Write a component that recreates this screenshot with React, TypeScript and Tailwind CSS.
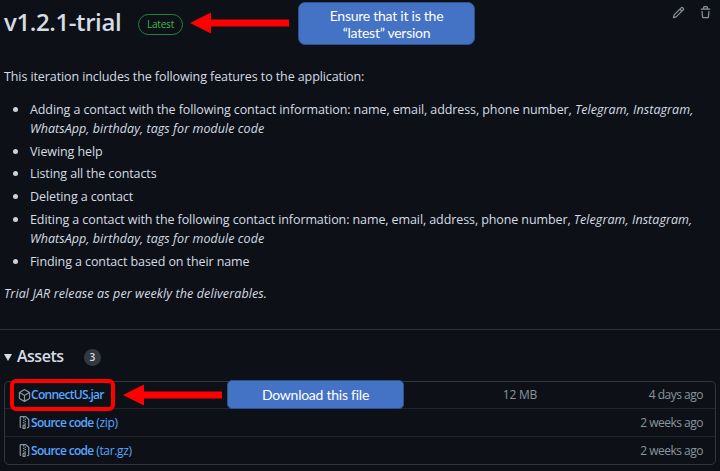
import type { ReactNode } from "react";

const PENCIL =
  "M11.013 1.427a1.75 1.75 0 012.474 0l1.086 1.086a1.75 1.75 0 010 2.474l-8.61 8.61c-.21.21-.47.364-.756.445l-3.251.93a.75.75 0 01-.927-.928l.929-3.25a1.75 1.75 0 01.445-.758l8.61-8.61zm1.414 1.06a.25.25 0 00-.354 0L10.811 3.75l1.439 1.44 1.263-1.263a.25.25 0 000-.354l-1.086-1.086zM11.189 6.25L9.75 4.81l-6.286 6.287a.25.25 0 00-.064.108l-.558 1.953 1.953-.558a.249.249 0 00.108-.064l6.286-6.286z";
const TRASH =
  "M6.5 1.75a.25.25 0 01.25-.25h2.5a.25.25 0 01.25.25V3h-3V1.75zm4.5 0V3h2.25a.75.75 0 010 1.5H2.75a.75.75 0 010-1.5H5V1.75C5 .784 5.784 0 6.75 0h2.5C10.216 0 11 .784 11 1.75zM4.496 6.675a.75.75 0 10-1.492.15l.66 6.6A1.75 1.75 0 005.405 15h5.19c.9 0 1.652-.681 1.741-1.576l.66-6.6a.75.75 0 00-1.492-.149l-.66 6.6a.25.25 0 01-.249.225h-5.19a.25.25 0 01-.249-.225l-.66-6.6z";
const PACKAGE =
  "M8.878.392a1.75 1.75 0 00-1.756 0l-5.25 3.045A1.75 1.75 0 001 4.951v6.098c0 .624.332 1.2.872 1.514l5.25 3.045a1.75 1.75 0 001.756 0l5.25-3.045c.54-.313.872-.89.872-1.514V4.951c0-.624-.332-1.2-.872-1.514L8.878.392zM7.875 1.69a.25.25 0 01.25 0l4.63 2.685L8 7.133 3.245 4.375l4.63-2.685zM2.5 5.677v5.372c0 .09.047.171.125.216l4.625 2.683V8.432L2.5 5.677zm6.25 8.271l4.625-2.683a.25.25 0 00.125-.216V5.677L8.75 8.432v5.516z";
const FILE_ZIP =
  "M3.5 1.75a.25.25 0 01.25-.25h3a.75.75 0 000 1.5h.5a.75.75 0 000-1.5h2.086a.25.25 0 01.177.073l2.914 2.914a.25.25 0 01.073.177v8.586a.25.25 0 01-.25.25h-.5a.75.75 0 000 1.5h.5A1.75 1.75 0 0014 13.25V4.664c0-.464-.184-.909-.513-1.237L10.573.513A1.75 1.75 0 009.336 0H3.75A1.75 1.75 0 002 1.75v11.5c0 .649.353 1.214.874 1.515a.75.75 0 10.752-1.298.25.25 0 01-.126-.217V1.75zM8.75 3a.75.75 0 000 1.5h.5a.75.75 0 000-1.5h-.5zM6 5.25a.75.75 0 01.75-.75h.5a.75.75 0 010 1.5h-.5A.75.75 0 016 5.25zm2 1.5A.75.75 0 018.75 6h.5a.75.75 0 010 1.5h-.5A.75.75 0 018 6.75zm-1.25.75a.75.75 0 000 1.5h.5a.75.75 0 000-1.5h-.5zM8 9.75A.75.75 0 018.75 9h.5a.75.75 0 010 1.5h-.5A.75.75 0 018 9.75zm-.75.75a1.75 1.75 0 00-1.75 1.75v3c0 .414.336.75.75.75h2.5a.75.75 0 00.75-.75v-3a1.75 1.75 0 00-1.75-1.75h-.5zM7 12.25a.25.25 0 01.25-.25h.5a.25.25 0 01.25.25v2.25H7v-2.25z";

function Icon({ d, className }: { d: string; className: string }) {
  return (
    <svg viewBox="0 0 16 16" fill="currentColor" className={`shrink-0 text-[#8b949e] ${className}`}>
      <path fillRule="evenodd" d={d} />
    </svg>
  );
}

function Arrow({ width, className }: { width: number; className: string }) {
  return (
    <svg width={width} height="22" viewBox={`0 0 ${width} 22`} className={`absolute ${className}`}>
      <path d={`M0 11 21 0.5V7.5H${width}V14.5H21V21.5Z`} fill="#ff0000" />
    </svg>
  );
}

function Callout({ className, children }: { className: string; children: ReactNode }) {
  return (
    <div
      className={`absolute flex items-center justify-center border border-[#2f528f] bg-[#4472c4] text-center font-[Lato,sans-serif] text-[14px] leading-[17px] whitespace-nowrap text-white ${className}`}
    >
      {children}
    </div>
  );
}

function Item({ children }: { children: ReactNode }) {
  return (
    <li className="flex whitespace-nowrap">
      <span className="mt-[7px] mr-[12px] ml-[9px] size-[5px] shrink-0 rounded-full bg-[#c9d1d9]" />
      <div>{children}</div>
    </li>
  );
}

function ContactFields({ action }: { action: string }) {
  return (
    <>
      {action} a contact with the following contact information: name, email, address, phone number,{" "}
      <em className="tracking-[0.06px]">
        Telegram, Instagram,
        <br />
        WhatsApp, birthday, tags for module code
      </em>
    </>
  );
}

function Asset({ icon, name, kind, size, age, className }: { icon: string; name: string; kind?: string; size?: string; age: string; className: string }) {
  return (
    <div className={`flex items-center pr-[12px] pl-[13px] ${className}`}>
      <Icon d={icon} className="size-[13px]" />
      <span className="text-[#58a6ff]">
        <span className="font-semibold tracking-[-0.72px]">{name}</span>
        {kind && <span className="tracking-[-0.35px]"> {kind}</span>}
      </span>
      <span className="ml-auto w-[60px] text-right">{size}</span>
      <span className="w-[166px] text-right tracking-[-0.5px]">{age}</span>
    </div>
  );
}

export default function App() {
  return (
    <main className="relative h-[471px] w-[720px] overflow-hidden bg-[#0d1117] font-['Open_Sans','Noto_Sans',sans-serif] text-[12.5px] tracking-[-0.25px] text-[#d5dce4]">
      <header className="flex h-[46px] items-start pl-[4px]">
        <h1 className="mt-[6px] w-[134px] text-[24px] leading-[32px] font-semibold tracking-[-0.4px] whitespace-nowrap">v1.2.1-trial</h1>
        <span className="mt-[14px] flex h-[21px] w-[45px] items-center justify-center rounded-full border border-[#238636] text-[10px] tracking-[-0.2px] text-[#3fb950]">
          Latest
        </span>
        <div className="mt-[6px] mr-[8px] ml-auto flex gap-[14px]">
          <Icon d={PENCIL} className="size-[13px]" />
          <Icon d={TRASH} className="size-[13px]" />
        </div>
      </header>

      <section className="h-[283px] pt-[21px] pl-[4px] leading-[19.4px] tracking-[-0.095px]">
        <p>This iteration includes the following features to the application:</p>
        <ul className="mt-[13.4px] flex flex-col gap-[3.2px]">
          <Item><ContactFields action="Adding" /></Item>
          <Item>Viewing help</Item>
          <Item>Listing all the contacts</Item>
          <Item>Deleting a contact</Item>
          <Item><ContactFields action="Editing" /></Item>
          <Item>Finding a contact based on their name</Item>
        </ul>
        <p className="mt-[13px] tracking-[0.11px] italic">Trial JAR release as per weekly the deliverables.</p>
      </section>

      <section className="border-t border-[#2b3138]">
        <h2 className="flex h-[51px] items-center pl-[4px] text-[16px] font-semibold tracking-[-0.5px]">
          <svg width="8" height="7" className="mt-[3px] mr-[5px]">
            <path d="M0 0H8L4 7Z" fill="currentColor" />
          </svg>
          Assets
          <span className="mt-[4px] ml-[20px] flex size-[17px] items-center justify-center rounded-full bg-[#343941] text-[10px]">3</span>
        </h2>
        <div className="mr-[4px] ml-[4px] rounded-[5px] border border-[#30363d] text-[12px] text-[#8b949e]">
          <Asset icon={PACKAGE} name="ConnectUS.jar" size="12 MB" age="4 days ago" className="h-[26px]" />
          <Asset icon={FILE_ZIP} name="Source code" kind="(zip)" age="2 weeks ago" className="h-[28px] border-t border-[#21262d]" />
          <Asset icon={FILE_ZIP} name="Source code" kind="(tar.gz)" age="2 weeks ago" className="h-[28px] border-t border-[#21262d]" />
        </div>
      </section>

      <Arrow width={99} className="top-[12px] left-[190px]" />
      <Callout className="top-[2px] left-[298px] h-[43px] w-[177px] rounded-[7px]">
        Ensure that it is the
        <br />
        “latest” version
      </Callout>
      <div className="absolute top-[379px] left-[10px] h-[32px] w-[105px] rounded-[6px] border-4 border-[#ff0000]" />
      <Arrow width={99} className="top-[384px] left-[123px]" />
      <Callout className="top-[380px] left-[227px] h-[29px] w-[177px] rounded-[5px]">Download this file</Callout>
    </main>
  );
}
